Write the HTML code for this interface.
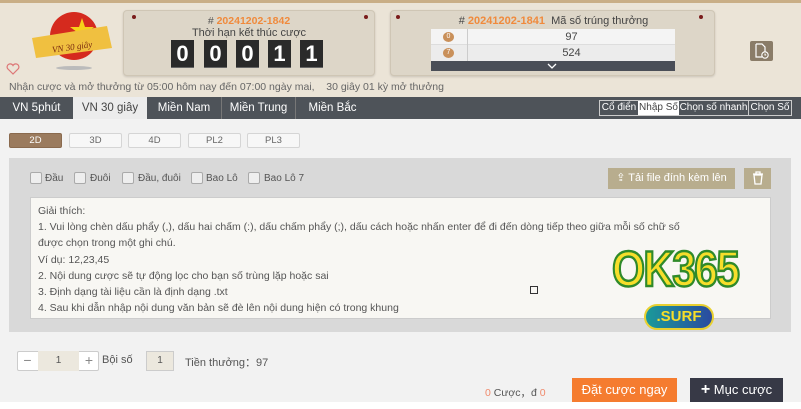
<!DOCTYPE html>
<html><head><meta charset="utf-8"><style>
*{box-sizing:border-box;margin:0;padding:0}
body{width:801px;height:409px;overflow:hidden;background:#fff;font-family:"Liberation Sans",sans-serif;font-size:11px;color:#555;position:relative}
.abs{position:absolute}
.hdr{left:0;top:0;width:801px;height:97px;background:#ebe4d7;border-top:3px solid #c9ae86}
.card{background:#ddd6c8;border:1px solid #cfc6b5;border-radius:4px;box-shadow:0 1px 2px rgba(0,0,0,.15)}
.dot{width:4px;height:4px;border-radius:50%;background:#7a1c1c;position:absolute}
.d{position:absolute;top:40px;width:23px;height:28px;background:#2a2a2a;color:#fff;font-weight:bold;font-size:22px;text-align:center;line-height:28px;border-bottom:1px solid #666}
.nav{left:0;top:97px;width:801px;height:22px;background:#4e5359}
.nav span{position:absolute;top:0;height:22px;line-height:22px;color:#fff;font-size:11.5px;text-align:center}
.main{left:0;top:119px;width:801px;height:283px;background:#f2f2f2}
.pill{position:absolute;top:133px;height:15px;border:1px solid #d5d5d5;background:#f7f7f7;border-radius:2px;font-size:9.5px;text-align:center;line-height:13px;color:#666}
.cb{position:absolute;top:172px;width:12px;height:12px;border:1px solid #aaa;border-radius:2px;background:#eee}
.cbt{position:absolute;top:173px;font-size:10px;color:#555}
.ta{left:30px;top:197px;width:741px;height:122px;background:#f8f7f3;border:1px solid #ccc}
.txt p{font-size:10.5px;color:#555;line-height:16.2px;white-space:nowrap}
</style></head><body>
<div class="abs hdr"></div>
<svg class="abs" style="left:22px;top:8px" width="95" height="65" viewBox="0 0 95 65">
<circle cx="52" cy="28" r="24" fill="#d52a1e"/>
<polygon points="60,10 63,19 72,19 65,24 67,33 60,28 53,33 55,24 48,19 57,19" fill="#f7d21a"/>
<path d="M10 30 L85 18 L90 40 L14 50 Z" fill="#f0c040"/>
<text x="30" y="42" font-family="Liberation Serif" font-style="italic" font-size="9" fill="#7a2a10" transform="rotate(-8 50 40)">VN 30 giây</text>
<ellipse cx="52" cy="60" rx="18" ry="2" fill="#bbb"/>
</svg>
<svg class="abs" style="left:6px;top:63px" width="14" height="12" viewBox="0 0 14 12"><path d="M7 11 L1.5 5.5 A3 3 0 0 1 7 2.5 A3 3 0 0 1 12.5 5.5 Z" fill="none" stroke="#d77" stroke-width="1.2"/></svg>
<div class="abs card" style="left:123px;top:10px;width:252px;height:66px">
<div class="dot" style="left:8px;top:4px"></div><div class="dot" style="left:240px;top:4px"></div>
<div class="abs" style="left:0;top:4px;width:250px;text-align:center;font-size:10.5px;color:#555">#&nbsp;<b style="color:#f08a3c">20241202-1842</b></div>
<div class="abs" style="left:0;top:16px;width:250px;text-align:center;font-size:11px;color:#444">Thời hạn kết thúc cược</div>
</div>
<div class="d" style="left:171px">0</div>
<div class="d" style="left:204px">0</div>
<div class="d" style="left:236px">0</div>
<div class="d" style="left:268px">1</div>
<div class="d" style="left:300px">1</div>
<div class="abs card" style="left:390px;top:10px;width:325px;height:66px">
<div class="dot" style="left:5px;top:4px"></div><div class="dot" style="left:308px;top:4px"></div>
<div class="abs" style="left:0;top:4px;width:325px;text-align:center;font-size:11px;color:#444">#&nbsp;<b style="color:#f08a3c">20241202-1841</b>&nbsp;&nbsp;Mã số trúng thưởng</div>
</div>
<div class="abs" style="left:431px;top:29px;width:244px;height:16px;background:#f4f4f4;border-bottom:1px solid #ddd"></div>
<div class="abs" style="left:431px;top:45px;width:244px;height:16px;background:#ececec"></div>
<div class="abs" style="left:467px;top:29px;width:1px;height:32px;background:#ccc"></div>
<div class="abs" style="left:443px;top:32px;width:11px;height:10px;border-radius:50%;background:#c9905a;color:#fff;font-size:7px;text-align:center;line-height:10px">0</div>
<div class="abs" style="left:443px;top:48px;width:11px;height:10px;border-radius:50%;background:#c9905a;color:#fff;font-size:7px;text-align:center;line-height:10px">7</div>
<div class="abs" style="left:468px;top:31px;width:207px;text-align:center;font-size:11px;color:#444">97</div>
<div class="abs" style="left:468px;top:47px;width:207px;text-align:center;font-size:11px;color:#444">524</div>
<div class="abs" style="left:431px;top:61px;width:244px;height:10px;background:#4a4e57"></div>
<svg class="abs" style="left:546px;top:62px" width="12" height="8"><path d="M2 2 L6 6 L10 2" stroke="#fff" fill="none" stroke-width="1.3"/></svg>
<div class="abs" style="left:750px;top:41px;width:23px;height:20px;background:#8a7c68;border-radius:2px"></div>
<svg class="abs" style="left:753px;top:43px" width="18" height="16" viewBox="0 0 18 16"><path d="M3 1 H9 L12 4 V9 M3 1 V14 H9" stroke="#fff" fill="none" stroke-width="1.2"/><circle cx="12" cy="12" r="3.2" stroke="#fff" fill="none" stroke-width="1.1"/><path d="M12 10.5 V12 H13.2" stroke="#fff" fill="none"/></svg>
<div class="abs" style="left:9px;top:81px;font-size:10.5px;color:#666;white-space:nowrap">Nhận cược và mở thưởng từ 05:00 hôm nay đến 07:00 ngày mai,&nbsp;&nbsp;&nbsp; 30 giây 01 kỳ mở thưởng</div>
<div class="abs nav">
<span style="left:0;width:73px">VN 5phút</span>
<span style="left:73px;width:74px;background:#ececec;color:#444">VN 30 giây</span>
<span style="left:147px;width:74px">Miền Nam</span>
<span style="left:221px;width:74px;border-left:1px solid #777">Miền Trung</span>
<span style="left:295px;width:74px;border-left:1px solid #777">Miền Bắc</span>
</div>
<div class="abs" style="left:599px;top:100px;width:193px;height:16px;border:1px solid #ccc;font-size:10px;color:#fff;line-height:14px;white-space:nowrap">
<span class="abs" style="left:0;width:38px;text-align:center">Cổ điển</span>
<span class="abs" style="left:38px;width:41px;background:#fff;color:#444;text-align:center">Nhập Số</span>
<span class="abs" style="left:79px;width:70px;text-align:center;border-right:1px solid #ccc">Chọn số nhanh</span>
<span class="abs" style="left:149px;width:42px;text-align:center">Chọn Số</span>
</div>
<div class="abs main"></div>
<div class="pill" style="left:9px;width:53px;background:#9b7b5e;color:#fff;border-color:#8a6a4e">2D</div>
<div class="pill" style="left:69px;width:53px">3D</div>
<div class="pill" style="left:128px;width:53px">4D</div>
<div class="pill" style="left:188px;width:53px">PL2</div>
<div class="pill" style="left:247px;width:53px">PL3</div>
<div class="abs" style="left:9px;top:158px;width:782px;height:174px;background:#d9d9d9"></div>
<div class="cb" style="left:30px"></div><div class="cbt" style="left:45px">Đầu</div>
<div class="cb" style="left:74px"></div><div class="cbt" style="left:90px">Đuôi</div>
<div class="cb" style="left:122px"></div><div class="cbt" style="left:138px">Đầu, đuôi</div>
<div class="cb" style="left:191px"></div><div class="cbt" style="left:206px">Bao Lô</div>
<div class="cb" style="left:248px"></div><div class="cbt" style="left:264px">Bao Lô 7</div>
<div class="abs" style="left:608px;top:168px;width:127px;height:21px;background:#b8ad8e;color:#fff;font-size:11px;line-height:21px;text-align:center">⇪ Tải file đính kèm lên</div>
<div class="abs" style="left:744px;top:168px;width:27px;height:21px;background:#b8ad8e"></div>
<svg class="abs" style="left:752px;top:171px" width="12" height="14" viewBox="0 0 12 14"><path d="M1 3 H11 M4 3 V1 H8 V3 M2 4 L3 13 H9 L10 4 Z" stroke="#fff" fill="none" stroke-width="1.3"/></svg>
<div class="abs ta"></div>
<div class="abs txt" style="left:38px;top:203px;width:720px">
<p>Giải thích:</p>
<p>1. Vui lòng chèn dấu phẩy (,), dấu hai chấm (:), dấu chấm phẩy (;), dấu cách hoặc nhấn enter để đi đến dòng tiếp theo giữa mỗi số chữ số</p>
<p>được chọn trong một ghi chú.</p>
<p>Ví dụ: 12,23,45</p>
<p>2. Nội dung cược sẽ tự động lọc cho bạn số trùng lặp hoặc sai</p>
<p>3. Định dạng tài liệu cần là định dạng .txt</p>
<p>4. Sau khi dẫn nhập nội dung văn bản sẽ đè lên nội dung hiện có trong khung</p>
</div>
<div class="abs" style="left:530px;top:286px;width:8px;height:8px;border:1px solid #333"></div>
<div class="abs" style="left:612px;top:240px;font-weight:bold;font-size:50px;color:#f6de2a;-webkit-text-stroke:2.5px #2f8a2a;letter-spacing:-2px;transform:scaleX(0.85);transform-origin:left">OK365</div>
<div class="abs" style="left:644px;top:304px;width:70px;height:26px;border-radius:13px;background:linear-gradient(90deg,#1a9a9a,#2a4aa0);border:2px solid #e8d030;color:#f6de2a;font-weight:bold;font-size:15px;text-align:center;line-height:22px">.SURF</div>
<div class="abs" style="left:17px;top:351px;width:82px;height:20px;border:1px solid #ccc;background:#fff;border-radius:2px"></div>
<div class="abs" style="left:38px;top:351px;width:41px;height:20px;background:#ece8de;font-size:10px;text-align:center;line-height:20px">1</div>
<div class="abs" style="left:17px;top:351px;width:21px;height:20px;text-align:center;line-height:19px;font-size:14px;color:#888">−</div>
<div class="abs" style="left:79px;top:351px;width:20px;height:20px;text-align:center;line-height:19px;font-size:14px;color:#888">+</div>
<div class="abs" style="left:102px;top:354px;font-size:11px">Bội số</div>
<div class="abs" style="left:146px;top:351px;width:28px;height:20px;background:#ece8de;border:1px solid #ccc;font-size:10px;text-align:center;line-height:18px">1</div>
<div class="abs" style="left:185px;top:354px;font-size:11px">Tiền thưởng：97</div>
<div class="abs" style="left:485px;top:385px;font-size:10.5px;white-space:nowrap"><span style="color:#f08a6c">0</span> Cược，đ <span style="color:#f08a6c">0</span></div>
<div class="abs" style="left:572px;top:378px;width:105px;height:24px;background:#f57c2f;color:#fff;font-size:13px;text-align:center;line-height:24px">Đặt cược ngay</div>
<div class="abs" style="left:690px;top:378px;width:93px;height:24px;background:#373946;color:#fff;font-size:13px;text-align:center;line-height:24px"><b style="font-size:16px">+</b> Mục cược</div>
</body></html>
